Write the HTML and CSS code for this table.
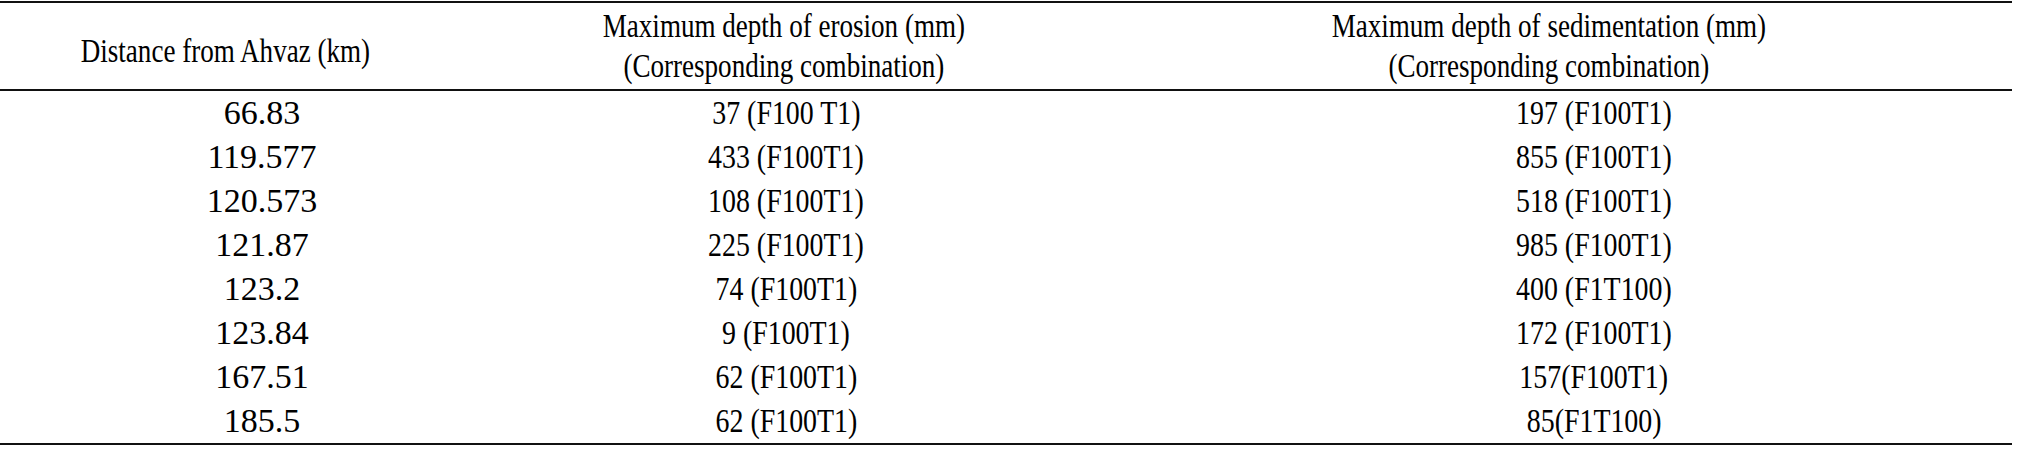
FILE: index.html
```html
<!DOCTYPE html>
<html lang="en">
<head>
<meta charset="utf-8">
<title>Erosion and sedimentation table</title>
<link rel="stylesheet" href="styles.css">
</head>
<body>
<table class="data-table">
  <colgroup>
    <col class="c1">
    <col class="c2">
    <col class="c3">
  </colgroup>
  <thead>
    <tr>
      <th class="h1"><span class="cond">Distance from Ahvaz (km)</span></th>
      <th class="h2"><span class="cond">Maximum depth of erosion (mm)<br>(Corresponding combination)</span></th>
      <th class="h3"><span class="cond">Maximum depth of sedimentation (mm)<br>(Corresponding combination)</span></th>
    </tr>
  </thead>
  <tbody>
    <tr><td>66.83</td><td><span class="cond">37 (F100 T1)</span></td><td class="d3"><span class="cond">197 (F100T1)</span></td></tr>
    <tr><td>119.577</td><td><span class="cond">433 (F100T1)</span></td><td class="d3"><span class="cond">855 (F100T1)</span></td></tr>
    <tr><td>120.573</td><td><span class="cond">108 (F100T1)</span></td><td class="d3"><span class="cond">518 (F100T1)</span></td></tr>
    <tr><td>121.87</td><td><span class="cond">225 (F100T1)</span></td><td class="d3"><span class="cond">985 (F100T1)</span></td></tr>
    <tr><td>123.2</td><td><span class="cond">74 (F100T1)</span></td><td class="d3"><span class="cond">400 (F1T100)</span></td></tr>
    <tr><td>123.84</td><td><span class="cond">9 (F100T1)</span></td><td class="d3"><span class="cond">172 (F100T1)</span></td></tr>
    <tr><td>167.51</td><td><span class="cond">62 (F100T1)</span></td><td class="d3"><span class="cond">157(F100T1)</span></td></tr>
    <tr><td>185.5</td><td><span class="cond">62 (F100T1)</span></td><td class="d3"><span class="cond">85(F1T100)</span></td></tr>
  </tbody>
</table>
</body>
</html>
```

FILE: styles.css
```css
html, body {
  margin: 0;
  padding: 0;
  background: #ffffff;
}

body {
  padding-top: 1px;
  font-family: "Liberation Serif", "Times New Roman", serif;
  color: #000000;
}

.data-table {
  width: 2012px;
  table-layout: fixed;
  border-collapse: collapse;
  border-top: 2px solid #111111;
  border-bottom: 2px solid #111111;
}

.c1 { width: 524px; }
.c2 { width: 524px; }
.c3 { width: 964px; }

.cond {
  display: inline-block;
  transform: scaleX(0.82);
  white-space: nowrap;
}

.data-table th {
  font-weight: normal;
  font-size: 33px;
  line-height: 40px;
  height: 88px;
  padding: 0;
  text-align: center;
  vertical-align: middle;
  border-bottom: 2px solid #111111;
  box-sizing: border-box;
}

.data-table th.h1 {
  padding: 10px 74px 0 0;
}

.data-table th.h2 {
  padding-right: 4px;
}

.data-table th.h3 {
  padding-left: 38px;
}

.data-table td {
  font-size: 34px;
  line-height: 44px;
  height: 44px;
  padding: 0;
  text-align: center;
  vertical-align: middle;
}

.data-table td.d3 {
  padding-left: 128px;
}
```
